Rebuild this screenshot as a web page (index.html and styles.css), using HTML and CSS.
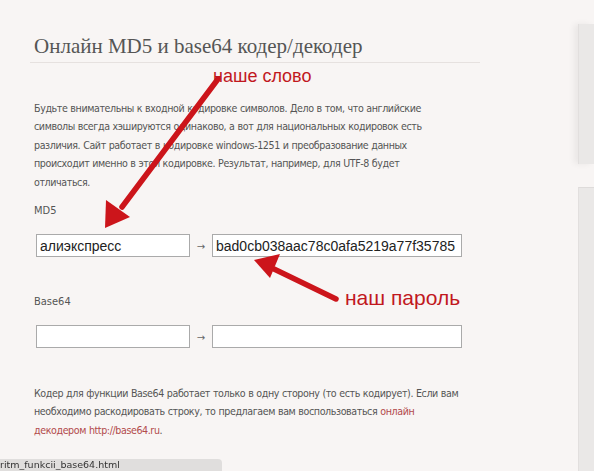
FILE: index.html
```html
<!DOCTYPE html>
<html lang="ru">
<head>
  <meta charset="UTF-8">
  <meta name="viewport" content="width=device-width, initial-scale=1.0">
  <title>Онлайн MD5 и base64 кодер/декодер</title>
  <link rel="stylesheet" href="styles.css">
</head>
<body>
  <div class="page">
    <div class="main">
      <h1 class="title">Онлайн MD5 и base64 кодер/декодер</h1>

      <p class="text intro">
        Будьте внимательны к входной кодировке символов. Дело в том, что английские<br>
        символы всегда хэшируются одинаково, а вот для национальных кодировок есть<br>
        различия. Сайт работает в кодировке windows-1251 и преобразование данных<br>
        происходит именно в этой кодировке. Результат, например, для UTF-8 будет<br>
        отличаться.
      </p>

      <div class="label md5-label">MD5</div>
      <div class="row">
        <input class="field src" type="text" value="алиэкспресс">
        <span class="to">&rarr;</span>
        <input class="field dst" type="text" value="bad0cb038aac78c0afa5219a77f35785">
      </div>

      <div class="label b64-label">Base64</div>
      <div class="row">
        <input class="field src" type="text" value="">
        <span class="to">&rarr;</span>
        <input class="field dst" type="text" value="">
      </div>

      <p class="text outro">
        Кодер для функции Base64 работает только в одну сторону (то есть кодирует). Если вам<br>
        необходимо раскодировать строку, то предлагаем вам воспользоваться <a href="#">онлайн<br>
        декодером http://base64.ru</a>.
      </p>
    </div>

    <div class="side">
      <div class="side-top"></div>
      <div class="side-bottom"></div>
    </div>

    <!-- red annotations drawn on top of the screenshot -->
    <svg class="marks" width="594" height="471" viewBox="0 0 594 471">
      <line x1="218" y1="79" x2="122" y2="207" stroke="#cc151b" stroke-width="5.5" stroke-linecap="round"/>
      <polygon points="105,228 106,200 130,217" fill="#cc151b"/>
      <line x1="336" y1="299" x2="274" y2="269" stroke="#cc151b" stroke-width="5.5" stroke-linecap="round"/>
      <polygon points="254,260 280,254 270,278" fill="#cc151b"/>
    </svg>
    <div class="note note-word">наше слово</div>
    <div class="note note-pass">наш пароль</div>
  </div>

  <div class="status">ritm_funkcii_base64.html</div>
</body>
</html>
```

FILE: styles.css
```css
html, body {
  margin: 0;
  padding: 0;
}

body {
  background-color: #f8f5f4;
  color: #555;
  overflow: hidden;
}

.page {
  position: relative;
  display: flex;
  width: 594px;
  height: 471px;
}

.main {
  width: 578px;
  padding: 32px 0 0 34px;
  box-sizing: border-box;
}

.title {
  font-family: "Liberation Serif", serif;
  font-weight: normal;
  font-size: 21px;
  line-height: 28px;
  color: #555;
  margin: 0 98px 0 -4px;
  padding: 0 0 2px 4px;
  border-bottom: 1px solid #e6e1df;
}

.text {
  font-family: "DejaVu Sans Condensed", "DejaVu Sans", sans-serif;
  font-size: 10.6px;
  letter-spacing: -0.4px;
  word-spacing: 0.3px;
  line-height: 18.4px;
  color: #555;
  margin: 0;
}

.intro {
  margin-top: 36px;
}

.outro {
  margin-top: 36px;
}

.text a {
  color: #b24a4c;
  text-decoration: none;
}

.label {
  font-family: "DejaVu Sans Condensed", "DejaVu Sans", sans-serif;
  font-size: 11px;
  line-height: 16px;
  color: #555;
}

.md5-label {
  margin-top: 12px;
}

.b64-label {
  margin-top: 37px;
}

.row {
  display: flex;
  align-items: center;
  margin: 15px 0 0 2px;
}

.field {
  height: 23px;
  margin: 0;
  padding: 0 3px;
  box-sizing: border-box;
  border: 1px solid #aaa;
  background: #fff;
  font-family: "Liberation Sans", Arial, sans-serif;
  font-size: 14px;
  color: #222;
  outline: none;
}

.src {
  width: 154px;
}

.dst {
  width: 250px;
}

.to {
  width: 22px;
  text-align: center;
  font-family: "DejaVu Sans", sans-serif;
  font-size: 10px;
  color: #666;
  padding-top: 2px;
}

.side {
  flex: 1;
  display: flex;
  flex-direction: column;
}

.side-top {
  margin-top: 24px;
  height: 140px;
  background: #eae8e7;
  box-shadow: -4px 0 6px rgba(0, 0, 0, 0.06);
  border-left: 1px solid #e2dfde;
}

.side-bottom {
  margin-top: 23px;
  flex: 1;
  background: #eae8e7;
  border-left: 1px solid #e2dfde;
  border-top: 1px solid #dedbda;
}

.marks {
  position: absolute;
  top: 0;
  left: 0;
  pointer-events: none;
}

.note {
  position: absolute;
  font-family: "Liberation Sans", Arial, sans-serif;
  font-size: 18px;
  line-height: 20px;
  color: #c1181e;
}

.note-word {
  left: 213px;
  top: 66px;
}

.note-pass {
  left: 345px;
  top: 287px;
  font-size: 21px;
  line-height: 22px;
}

.status {
  position: fixed;
  left: 0;
  bottom: 0;
  width: 222px;
  height: 12px;
  background: #e0dedd;
  border-top-right-radius: 4px;
  font-family: "DejaVu Sans", sans-serif;
  font-size: 9.5px;
  line-height: 12px;
  color: #333;
  overflow: hidden;
  white-space: nowrap;
}
```
